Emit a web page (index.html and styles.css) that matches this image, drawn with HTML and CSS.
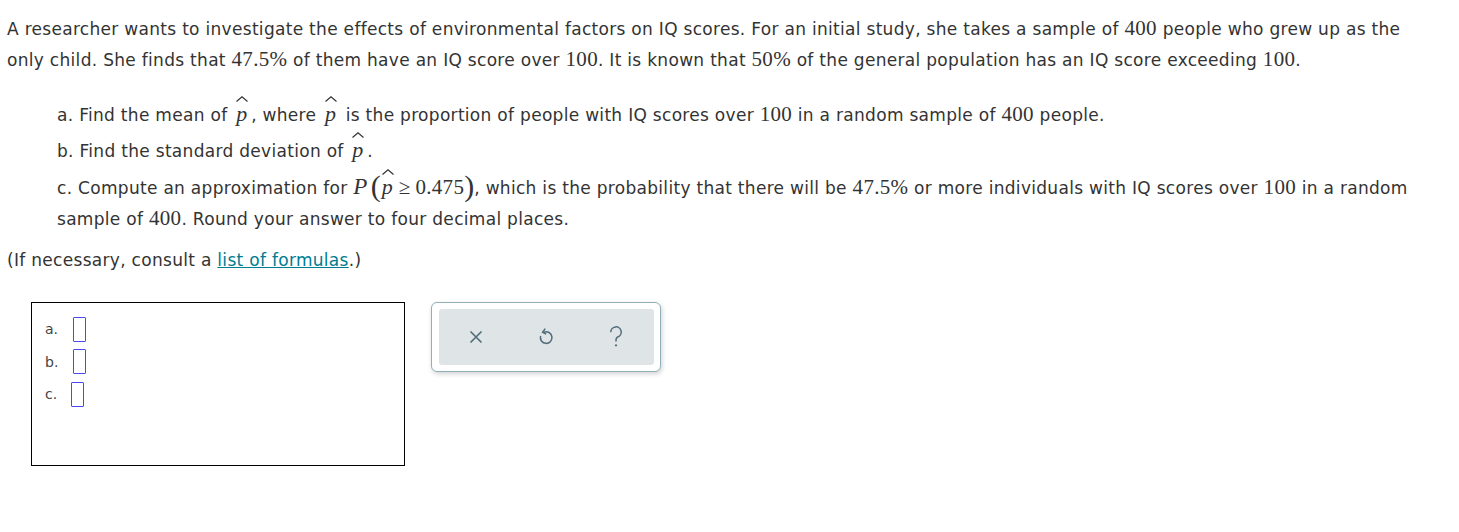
FILE: index.html
```html
<!DOCTYPE html>
<html>
<head>
<meta charset="utf-8">
<link rel="stylesheet" href="styles.css">
</head>
<body>
<div class="page">
  <p class="intro">A researcher wants to investigate the effects of environmental factors on IQ scores. For an initial study, she takes a sample of <span class="m">400</span> people who grew up as the only child. She finds that <span class="m">47.5%</span> of them have an IQ score over <span class="m">100</span>. It is known that <span class="m">50%</span> of the general population has an IQ score exceeding <span class="m">100</span>.</p>
  <ol class="parts">
    <li>a. Find the mean of <span class="hat">p<svg class="caret" width="12" height="6" viewBox="0 0 12 6"><path d="M0.5 5.5 L6 0.8 L11.5 5.5" stroke="#333" stroke-width="1.2" fill="none"/></svg></span>, where <span class="hat">p<svg class="caret" width="12" height="6" viewBox="0 0 12 6"><path d="M0.5 5.5 L6 0.8 L11.5 5.5" stroke="#333" stroke-width="1.2" fill="none"/></svg></span> is the proportion of people with IQ scores over <span class="m">100</span> in a random sample of <span class="m">400</span> people.</li>
    <li>b. Find the standard deviation of <span class="hat">p<svg class="caret" width="12" height="6" viewBox="0 0 12 6"><path d="M0.5 5.5 L6 0.8 L11.5 5.5" stroke="#333" stroke-width="1.2" fill="none"/></svg></span>.</li>
    <li class="wrap">c. Compute an approximation for <span class="m bigp"><i>P</i></span><span class="paren">(</span><span class="hat tight">p<svg class="caret" width="12" height="6" viewBox="0 0 12 6"><path d="M0.5 5.5 L6 0.8 L11.5 5.5" stroke="#333" stroke-width="1.2" fill="none"/></svg></span><span class="m"><span class="rel">&ge;</span>0.475</span><span class="paren">)</span>, which is the probability that there will be <span class="m">47.5%</span> or more individuals with IQ scores over <span class="m">100</span> in a random sample of <span class="m">400</span>. Round your answer to four decimal places.</li>
  </ol>
  <p class="note">(If necessary, consult a <a href="#">list of formulas</a>.)</p>
  <div class="answers">
    <div class="abox">
      <div class="arow"><span class="al">a.</span><span class="inp"></span></div>
      <div class="arow"><span class="al">b.</span><span class="inp"></span></div>
      <div class="arow"><span class="al c">c.</span><span class="inp"></span></div>
    </div>
    <div class="tools">
      <div class="tools-in">
        <svg class="ic" width="18" height="18" viewBox="0 0 18 18"><path d="M3.5 3.5 L14.5 14.5 M14.5 3.5 L3.5 14.5" stroke="#4f6b78" stroke-width="1.6" fill="none"/></svg>
        <svg class="ic" width="18" height="20" viewBox="0 0 18 20"><path d="M7 5.2 A5.8 5.8 0 1 1 3.6 9" stroke="#4f6b78" stroke-width="1.5" fill="none"/><path d="M8.2 1.6 L5.6 5.2 L9.2 7.2" stroke="#4f6b78" stroke-width="1.5" fill="none"/></svg>
        <svg class="ic" width="18" height="22" viewBox="0 0 18 22"><path d="M3.8 6.2 A5.2 5.2 0 1 1 10.6 11 Q9 12 9 14 V15.6" stroke="#4f6b78" stroke-width="1.5" fill="none"/><circle cx="9" cy="19.3" r="1.1" fill="#4f6b78"/></svg>
      </div>
    </div>
  </div>
</div>
</body>
</html>
```
FILE: styles.css
```css
body {
  margin: 0;
  font-family: "DejaVu Sans", Verdana, sans-serif;
  font-size: 17px;
  letter-spacing: 0.3px;
  color: #333;
  background: #fff;
}
.page {
  padding: 13px 7px 0 7px;
}
.intro {
  margin: 0;
  line-height: 30px;
  width: 1425px;
}
.m {
  font-family: "Liberation Serif", "Times New Roman", serif;
  font-size: 21px;
  letter-spacing: 0.3px;
}
.m i { font-style: italic; }
.bigp { font-size: 23px; padding-right: 3px; }
.rel { margin: 0 5px 0 4px; }
.hat {
  font-family: "Liberation Serif", "Times New Roman", serif;
  font-style: italic;
  font-size: 22px;
  letter-spacing: 0;
  position: relative;
  display: inline-block;
  line-height: 1;
  padding: 0 4px 0 3px;
}
.hat.tight { padding: 0 2px 0 1px; }
.caret {
  position: absolute;
  left: 50%;
  top: -7px;
  margin-left: -6px;
}
.paren {
  font-family: "Liberation Serif", serif;
  font-size: 30px;
  letter-spacing: 0;
  line-height: 0;
  vertical-align: -2px;
}
.parts {
  list-style: none;
  margin: 21px 0 0 0;
  padding: 0 0 0 50px;
}
.parts li {
  line-height: 36px;
}
.parts li.wrap {
  line-height: 30px;
  margin-top: 3px;
  width: 1360px;
}
.note {
  margin: 11px 0 0 0;
  line-height: 30px;
}
.note a {
  color: #007c92;
  text-decoration: underline;
}
.answers {
  display: flex;
  align-items: flex-start;
  gap: 26px;
  margin: 27px 0 0 24px;
}
.abox {
  width: 372px;
  height: 152px;
  border: 1px solid #000;
  padding: 10px 0 0 0;
}
.arow {
  display: flex;
  align-items: center;
  height: 32.5px;
  font-size: 14px;
  letter-spacing: 0;
  color: #444;
  padding-left: 13px;
}
.al { width: 28px; }
.al.c { width: 26px; }
.inp {
  width: 11px;
  height: 23px;
  border: 1px solid #4a4af0;
  border-radius: 1px;
}
.tools {
  border: 1px solid #8fb0b8;
  border-radius: 6px;
  padding: 6px 6px 6px 7px;
  box-shadow: 1px 2px 5px rgba(0,0,0,0.18);
  background: #fff;
}
.tools-in {
  width: 215px;
  height: 56px;
  background: #dfe5e7;
  border-radius: 3px;
  display: flex;
  align-items: center;
  gap: 52px;
  padding-left: 28px;
  box-sizing: border-box;
}
```
